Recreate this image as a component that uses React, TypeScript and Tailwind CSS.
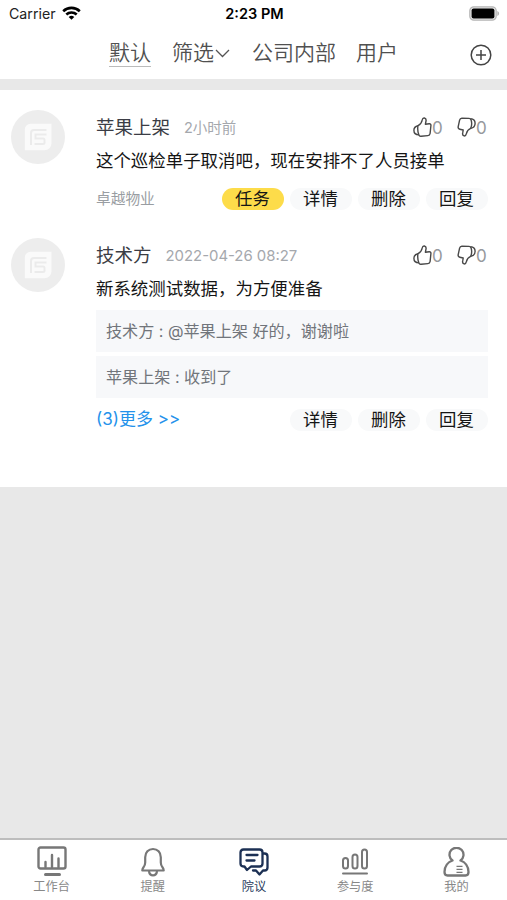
import React from 'react';

const font = "font-[Inter,'Noto_Sans_CJK_SC',sans-serif]";

const WifiIcon = () => (
  <svg width="19" height="14" viewBox="0 0 19 14" fill="none" stroke="#000" strokeWidth="2.6">
    <path d="M1.2 5.2a12 12 0 0 1 16.6 0" />
    <path d="M4.3 8.5a7.6 7.6 0 0 1 10.4 0" />
    <path d="M9.5 13.8 6.7 11a4.1 4.1 0 0 1 5.6 0z" fill="#000" stroke="none" />
  </svg>
);

const BatteryIcon = () => (
  <svg width="31" height="15" viewBox="0 0 31 15">
    <rect x="0.8" y="0.8" width="26.4" height="13.4" rx="4" fill="#e6e6e6" stroke="#b5b5b5" strokeWidth="1.2" />
    <rect x="2.6" y="2.6" width="22.8" height="9.8" rx="2" fill="#000" />
    <path d="M28.3 5v5c1.1-.4 1.8-1.4 1.8-2.5S29.4 5.4 28.3 5z" fill="#b5b5b5" />
  </svg>
);

const Avatar = () => (
  <div className="flex h-[54px] w-[54px] shrink-0 items-center justify-center rounded-full bg-[#ededed]">
    <svg width="28" height="28" viewBox="0 0 28 28" fill="none">
      <path d="M6.500.8h21v19.500a7 7 0 0 1-7 7H.8V6.500A5.700 5.700 0 0 1 6.500.8z" fill="#fafafa" />
      <path d="M22.500 7H10a3 3 0 0 0-3 3v12" stroke="#ebebeb" strokeWidth="2" />
      <path d="M22.500 11.500h-11v4H19a1.500 1.500 0 0 1 1.500 1.500v2.500A1.500 1.500 0 0 1 19 21h-8.500" stroke="#ebebeb" strokeWidth="2" />
    </svg>
  </div>
);

const ThumbUp = () => (
  <svg width="19" height="20" viewBox="0 0 19 20" fill="none" stroke="#484848" strokeWidth="1.4" strokeLinejoin="round">
    <path d="M5 8.700C7.400 7.600 8.700 5.800 9.200 3c.3-1.500 1.100-2.200 2.200-2 1.400.3 1.900 1.500 1.600 3l-.6 3.200 3.800-.5c1.200-.1 1.900.8 1.700 2l-.8 7.800c-.2 1.300-.9 2-2.200 2.100l-6.800.7c-1.100.1-1.800-.4-2.200-1.400C4.700 14.800 4.400 11.800 5 8.700z" />
    <path d="M5 8.700C2.400 9.300.9 11 .9 13.300c0 2.700 1.900 4.500 5 4.600" />
  </svg>
);

const ThumbDown = () => (
  <svg width="19" height="20" viewBox="0 0 19 20" fill="none" stroke="#484848" strokeWidth="1.4" strokeLinejoin="round">
    <path d="M13.700 11.300c-2.400 1-3.700 2.600-4.300 5.300-.4 1.700-1.200 2.500-2.300 2.300-1.300-.3-1.700-1.500-1.400-3l.5-2.900-3.400-.8c-1.200-.3-1.900-1.200-1.600-2.500l1.400-6.500C2.900 2 3.600 1.200 4.800 1.200l7.200.2c1.200.1 1.800.6 2.100 1.600.9 2.800.7 5.700-.4 8.300z" />
    <path d="M13.700 11.300c2.800-.5 4.400-2.500 4.400-5.100 0-2.700-1.600-4.400-4.500-4.500" />
  </svg>
);

const Votes = () => (
  <div className="flex items-center text-[17px] leading-5 text-[#96999d]">
    <ThumbUp />
    <span className="w-[25px] pt-px">0</span>
    <ThumbDown />
    <span className="w-[12px] pt-px">0</span>
  </div>
);

const actionStyle =
  'flex h-[22px] w-[62px] items-center justify-center rounded-full pr-px text-[17.400px] leading-none text-[#151515]';

const Actions = ({ task = false }: { task?: boolean }) => (
  <div className="ml-auto flex gap-[6px]">
    {task && <button className={`${actionStyle} bg-[#fddc4a]`}>任务</button>}
    {['详情', '删除', '回复'].map((label) => (
      <button key={label} className={`${actionStyle} bg-[#f8f9fa]`}>
        {label}
      </button>
    ))}
  </div>
);

interface PostProps {
  name: string;
  time: string;
  timeClass: string;
  text: string;
  children: React.ReactNode;
}

const Post: React.FC<PostProps> = ({ name, time, timeClass, text, children }) => (
  <article className="flex pr-[19px] pl-[11px]">
    <Avatar />
    <div className="ml-[31px] flex-1 pt-[7px]">
      <div className="flex h-5 items-center">
        <span className="text-[18.500px] leading-5 text-[#3b3d45]">{name}</span>
        <span className={`ml-[14px] pt-[2px] leading-5 text-[#a5a8ad] ${timeClass}`}>{time}</span>
        <div className="ml-auto">
          <Votes />
        </div>
      </div>
      <p className="mt-[12px] text-[17.450px] leading-[24px] whitespace-nowrap text-[#151515]">{text}</p>
      {children}
    </div>
  </article>
);

const WorkIcon = () => (
  <svg width="30" height="31" viewBox="0 0 30 31" fill="none" stroke="#777" strokeWidth="2.400" strokeLinecap="round">
    <rect x="1.500" y="1.500" width="27" height="21" rx="2" />
    <path d="M8.500 16v5M15 9v12M21.500 12.500v8.500" />
    <path d="M8.500 28.500h14" strokeWidth="3" />
  </svg>
);

const BellIcon = () => (
  <svg width="26" height="30" viewBox="0 0 26 30" fill="none" stroke="#777" strokeWidth="2.200" strokeLinejoin="round">
    <path d="M13 2c-4.600 0-7.800 3.500-7.800 8.200v5.300c0 2-.6 3.300-1.700 4.800-.7.900-1.200 1.700-1.200 3.200h21.400c0-1.500-.5-2.300-1.200-3.200-1.100-1.500-1.700-2.800-1.700-4.800v-5.300C20.800 5.500 17.600 2 13 2z" />
    <path d="M8.900 24c.4 2.700 1.900 4.300 4.100 4.300s3.700-1.600 4.100-4.300" />
  </svg>
);

const ChatIcon = () => (
  <svg width="30" height="28" viewBox="0 0 30 28" fill="none" stroke="#1c3054" strokeWidth="2.300" strokeLinejoin="round" strokeLinecap="round">
    <path d="M4.500 1.500h16q3 0 3 3v11q0 3-3 3H12l-4 3.500-2.500-3.500h-1q-3 0-3-3v-11q0-3 3-3z" />
    <path d="M7.500 7h11M7.500 12.500h8" />
    <path d="M24 5.500h1.500q3 0 3 3v11q0 3-3 3H24l-3.500 4-3.500-4h-3" />
  </svg>
);

const ChartIcon = () => (
  <svg width="28" height="28" viewBox="0 0 28 28" fill="none" stroke="#777" strokeWidth="2" strokeLinecap="round">
    <rect x="2" y="10" width="5" height="10.500" rx="2.500" />
    <rect x="11.500" y="6.500" width="5" height="14" rx="2.500" />
    <rect x="21" y="1.500" width="5" height="19" rx="2.500" />
    <path d="M2 25.500h24" />
  </svg>
);

const UserIcon = () => (
  <svg width="27" height="30" viewBox="0 0 27 30" fill="none" stroke="#777" strokeWidth="2.300" strokeLinejoin="round">
    <path d="M9.500 13.500A7 7 0 1 1 17.500 13.500c4.500 1.600 8 6 8 11.500 0 2.500-.8 3.500-3 3.500h-18c-2.200 0-3-1-3-3.500 0-5.500 3.500-9.900 8-11.500z" />
    <path d="M13.500 19.300h6M13.500 22.300h6M13.500 25.300h6" strokeWidth="1.300" />
  </svg>
);

const tabs = [
  { label: '工作台', icon: <WorkIcon /> },
  { label: '提醒', icon: <BellIcon /> },
  { label: '院议', icon: <ChatIcon />, active: true },
  { label: '参与度', icon: <ChartIcon /> },
  { label: '我的', icon: <UserIcon /> },
];

export default function App() {
  return (
    <div className={`flex h-[900px] w-[507px] flex-col overflow-hidden bg-[#e8e8e8] ${font}`}>
      <header className="h-[79px] shrink-0 bg-white">
        <div className="grid h-[27px] grid-cols-3 items-center pr-[7px] pl-[9px] text-[14px] text-black">
          <div className="flex items-center gap-[6px]">
            <span className="text-[14.200px] text-[#222]">Carrier</span>
            <WifiIcon />
          </div>
          <span className="text-center text-[14.500px] font-semibold">2:23 PM</span>
          <div className="flex justify-end">
            <BatteryIcon />
          </div>
        </div>
        <nav className="flex h-[52px] items-center pr-[15px] pl-[109px] text-[21px] font-[350] text-[#505050]">
          <span className="h-[28px] border-b border-[#bbb] leading-[28px]">默认</span>
          <span className="ml-[21px] leading-[28px]">筛选</span>
          <svg className="ml-px" width="15" height="9" viewBox="0 0 15 9" fill="none" stroke="#555" strokeWidth="1.300">
            <path d="m1 1 6.500 6.500L14 1" />
          </svg>
          <span className="ml-[22px] leading-[28px]">公司内部</span>
          <span className="ml-5 leading-[28px]">用户</span>
          <svg className="mt-1 ml-auto" width="22" height="22" viewBox="0 0 22 22" fill="none" stroke="#444" strokeWidth="1.500">
            <circle cx="11" cy="11" r="9.800" />
            <path d="M11 6v10M6 11h10" />
          </svg>
        </nav>
      </header>

      <main className="mt-[11px] h-[397px] shrink-0 bg-white pt-[20px]">
        <Post
          name="苹果上架"
          time="2小时前"
          timeClass="text-[14.500px]"
          text="这个巡检单子取消吧，现在安排不了人员接单"
        >
          <div className="mt-[15px] flex h-[22px] items-center">
            <span className="text-[14.700px] text-[#999da2]">卓越物业</span>
            <Actions task />
          </div>
        </Post>
        <div className="h-[28px]" />
        <Post
          name="技术方"
          time="2022-04-26 08:27"
          timeClass="text-[14.900px]"
          text="新系统测试数据，为方便准备"
        >
          <div className="mt-[9px] flex flex-col gap-[4px] text-[16.100px] text-[#71757b]">
            <div className="flex h-[42px] items-center bg-[#f7f8fa] pt-px pl-[10px]">技术方 : @苹果上架 好的，谢谢啦</div>
            <div className="flex h-[42px] items-center bg-[#f7f8fa] pt-px pl-[10px]">苹果上架 : 收到了</div>
          </div>
          <div className="mt-[11px] flex h-[22px] items-center">
            <span className="text-[17px] text-[#2492eb]">(3)更多 &gt;&gt;</span>
            <Actions />
          </div>
        </Post>
      </main>

      <footer className="mt-auto grid h-[62px] shrink-0 grid-cols-5 border-t-2 border-[#bdbdbd] bg-white pl-px">
        {tabs.map((tab) => (
          <div key={tab.label} className="flex flex-col items-center pt-[6px]">
            <div className="flex h-[31px] items-center">{tab.icon}</div>
            <span
              className={`mt-[2px] text-[12.200px] leading-[16px] ${tab.active ? 'text-[#2b3d60]' : 'text-[#888]'}`}
            >
              {tab.label}
            </span>
          </div>
        ))}
      </footer>
    </div>
  );
}
